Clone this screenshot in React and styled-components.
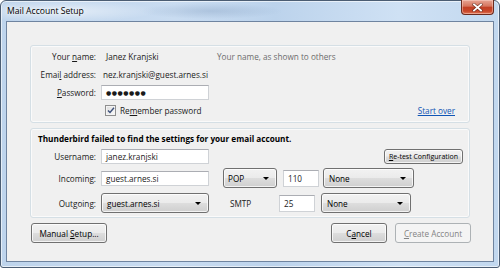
import React from "react";
import styled, { createGlobalStyle } from "styled-components";

const Global = createGlobalStyle`
  html, body { margin: 0; padding: 0; background: #fff; }
  body { width: 500px; height: 268px; overflow: hidden; }
  * { box-sizing: border-box; }
`;

const FONT = `"Open Sans", "Noto Sans", "DejaVu Sans", sans-serif`;

const Window = styled.div`
  width: 500px;
  height: 268px;
  border: 1px solid #4b5d73;
  border-radius: 6px 6px 3px 3px;
  background:
    radial-gradient(ellipse 120px 14px at 60px 10px, rgba(255,255,255,0.55), rgba(255,255,255,0) 80%),
    radial-gradient(ellipse 90px 10px at 210px 10px, rgba(90,120,160,0.22), rgba(90,120,160,0) 80%),
    linear-gradient(to right, #bed4ec 0%, #c9dcf1 35%, #bcd3ec 55%, #cfe1f4 80%, #c2d8ef 100%);
  padding: 0 5px 5px 5px;
  display: flex;
  flex-direction: column;
  font-family: ${FONT};
  font-size: 8.2px;
  color: #1a1a1a;
  box-shadow: inset 0 0 0 1px rgba(255,255,255,0.6);
`;

const TitleBar = styled.div`
  height: 20px;
  display: flex;
  align-items: flex-start;
  justify-content: space-between;
`;

const Title = styled.div`
  padding: 4px 0 0 1px;
  font-size: 8.6px;
  color: #000;
  text-shadow: 0 0 6px rgba(255,255,255,0.9), 0 0 3px rgba(255,255,255,0.9);
`;

const CloseButton = styled.div`
  width: 33px;
  height: 15px;
  margin-top: -1px;
  border: 1px solid #6a2a1e;
  border-top: none;
  border-radius: 0 0 4px 4px;
  background: linear-gradient(to bottom, #e7a594 0%, #d6745d 45%, #c23f24 50%, #c9472a 80%, #e07a5a 100%);
  box-shadow: inset 0 0 0 1px rgba(255,220,210,0.45);
  display: flex;
  align-items: center;
  justify-content: center;
`;

const Client = styled.div`
  flex: 1;
  border: 1px solid #6f84a0;
  background: #f0f0f0;
  padding: 23px 22px 0 23px;
  display: flex;
  flex-direction: column;
  gap: 5px;
`;

const Group = styled.div`
  width: 440px;
  height: ${(p) => p.$h}px;
  border: 1px solid #d5dfe5;
  border-radius: 3px;
  box-shadow: inset 0 0 0 1px #fafafa;
  background: #f0f0f0;
`;

const FormGrid = styled.div`
  display: grid;
  grid-template-columns: 65px 108px 1fr;
  grid-auto-rows: 18px;
  column-gap: 5px;
  padding-top: 1px;
  align-items: center;
`;

const Label = styled.div`
  text-align: right;
  white-space: nowrap;
  color: #1a1a1a;
`;

const Value = styled.div`
  padding-left: 5px;
  white-space: nowrap;
`;

const Clip = styled.div`
  overflow: hidden;
  margin-left: 2px;
  margin-right: 1px;
  direction: rtl;
  text-align: left;
  white-space: nowrap;
`;

const ClipText = styled.bdi`
  direction: ltr;
`;

const Hint = styled.div`
  padding-left: 3px;
  color: #6d6d6d;
  white-space: nowrap;
`;

const TextBox = styled.div`
  width: ${(p) => p.$w || 108}px;
  height: ${(p) => p.$h || 15}px;
  margin-left: ${(p) => p.$ml || 0}px;
  background: #fff;
  border: 1px solid #cfd2d6;
  border-top-color: #abadb3;
  padding-left: ${(p) => p.$pl || 4}px;
  display: flex;
  align-items: center;
  white-space: nowrap;
  flex-shrink: 0;
`;

const Dots = styled.span`
  font-family: "DejaVu Sans", sans-serif;
  font-size: 6px;
  letter-spacing: 0.5px;
`;

const CheckRow = styled.div`
  grid-column: 2 / span 1;
  display: flex;
  align-items: center;
  gap: 4px;
  padding-left: 4px;
  white-space: nowrap;
`;

const CheckBox = styled.div`
  width: 11px;
  height: 11px;
  border: 1px solid #8f8f8f;
  background: linear-gradient(135deg, #dcdcdc, #fbfbfb);
  box-shadow: inset 0 0 0 1px #f4f4f4;
  display: flex;
  align-items: center;
  justify-content: center;
`;

const Link = styled.a`
  justify-self: end;
  margin-right: 14px;
  color: #0f55b5;
  text-decoration: underline;
  white-space: nowrap;
`;

const Heading = styled.div`
  font-weight: 700;
  color: #000;
  line-height: 14px;
  padding: 3px 0 0 7px;
`;

const Row = styled.div`
  display: flex;
  align-items: center;
  height: ${(p) => p.$h}px;
  margin-top: ${(p) => p.$mt}px;
`;

const RowLabel = styled.div`
  width: 70px;
  padding-right: 5px;
  text-align: right;
  flex-shrink: 0;
  white-space: nowrap;
`;

const winBtn = `
  border: 1px solid #707070;
  border-radius: 3px;
  background: linear-gradient(to bottom, #f2f2f2 0%, #ebebeb 48%, #dddddd 52%, #cfcfcf 100%);
  box-shadow: inset 0 0 0 1px rgba(255,255,255,0.75);
  color: #000;
  white-space: nowrap;
`;

const Select = styled.div`
  ${winBtn}
  width: ${(p) => p.$w}px;
  height: 20px;
  margin-left: ${(p) => p.$ml || 0}px;
  padding: 0 7px 0 ${(p) => p.$pl || 5}px;
  display: flex;
  align-items: center;
  justify-content: space-between;
  flex-shrink: 0;
`;

const Arrow = styled.span`
  width: 0;
  height: 0;
  border-left: 3px solid transparent;
  border-right: 3px solid transparent;
  border-top: 3px solid #000;
  margin-top: 1px;
`;

const PlainText = styled.div`
  margin-left: ${(p) => p.$ml}px;
  width: ${(p) => p.$w}px;
  white-space: nowrap;
`;

const SmallButton = styled.div`
  ${winBtn}
  margin-left: auto;
  margin-right: 6px;
  height: 15px;
  width: 79px;
  font-size: 7px;
  display: flex;
  align-items: center;
  justify-content: center;
`;

const ButtonRow = styled.div`
  display: flex;
  align-items: center;
  height: 20px;
  gap: 8px;
`;

const Button = styled.div`
  ${winBtn}
  width: ${(p) => p.$w}px;
  height: 20px;
  margin-left: ${(p) => p.$ml || 0}px;
  display: flex;
  align-items: center;
  justify-content: center;
  ${(p) =>
    p.$disabled &&
    `
    border-color: #adb2b5;
    background: #f4f4f4;
    box-shadow: none;
    color: #838383;
  `}
`;

const Spacer = styled.div`
  flex: 1;
`;

export default function App() {
  return (
    <>
      <Global />
      <Window>
        <TitleBar>
          <Title>Mail Account Setup</Title>
          <CloseButton>
            <svg width="11" height="9" viewBox="0 0 11 9">
              <path d="M2 1.5 L9 7.5 M9 1.5 L2 7.5" stroke="#3a1a14" strokeWidth="3.2" strokeLinecap="square" opacity="0.55" />
              <path d="M2 1.5 L9 7.5 M9 1.5 L2 7.5" stroke="#fff" strokeWidth="1.8" strokeLinecap="square" />
            </svg>
          </CloseButton>
        </TitleBar>
        <Client>
          <Group $h={78}>
            <FormGrid>
              <Label>Your <u>n</u>ame:</Label>
              <Value>Janez Kranjski</Value>
              <Hint>Your name, as shown to others</Hint>

              <Label>Emai<u>l</u> address:</Label>
              <Clip><ClipText>janez.kranjski@guest.arnes.si</ClipText></Clip>
              <div />

              <Label><u>P</u>assword:</Label>
              <TextBox><Dots>●●●●●●●</Dots></TextBox>
              <div />

              <div />
              <CheckRow>
                <CheckBox>
                  <svg width="8" height="7" viewBox="0 0 8 7">
                    <path d="M1 3.5 L3 5.5 L7 0.8" fill="none" stroke="#3c4f7a" strokeWidth="1.4" />
                  </svg>
                </CheckBox>
                <span>Re<u>m</u>ember password</span>
              </CheckRow>
              <Link>Start over</Link>
            </FormGrid>
          </Group>

          <Group $h={90}>
            <Heading>Thunderbird failed to find the settings for your email account.</Heading>
            <Row $h={15} $mt={3}>
              <RowLabel>Username:</RowLabel>
              <TextBox>janez.kranjski</TextBox>
              <SmallButton><span><u>R</u>e-test Configuration</span></SmallButton>
            </Row>
            <Row $h={20} $mt={4}>
              <RowLabel>Incoming:</RowLabel>
              <TextBox>guest.arnes.si</TextBox>
              <Select $w={54} $ml={14} $pl={4}>POP<Arrow /></Select>
              <TextBox $w={36} $h={17} $ml={6}>110</TextBox>
              <Select $w={91} $ml={4}>None<Arrow /></Select>
            </Row>
            <Row $h={20} $mt={5}>
              <RowLabel>Outgoing:</RowLabel>
              <Select $w={108}>guest.arnes.si<Arrow /></Select>
              <PlainText $ml={21} $w={49}>SMTP</PlainText>
              <TextBox $w={36} $h={17}>25</TextBox>
              <Select $w={90} $ml={6}>None<Arrow /></Select>
            </Row>
          </Group>

          <ButtonRow>
            <Button $w={76} $ml={1}><span>Manual <u>S</u>etup...</span></Button>
            <Spacer />
            <Button $w={56}><span>C<u>a</u>ncel</span></Button>
            <Button $w={76} $disabled><span><u>C</u>reate Account</span></Button>
          </ButtonRow>
        </Client>
      </Window>
    </>
  );
}
